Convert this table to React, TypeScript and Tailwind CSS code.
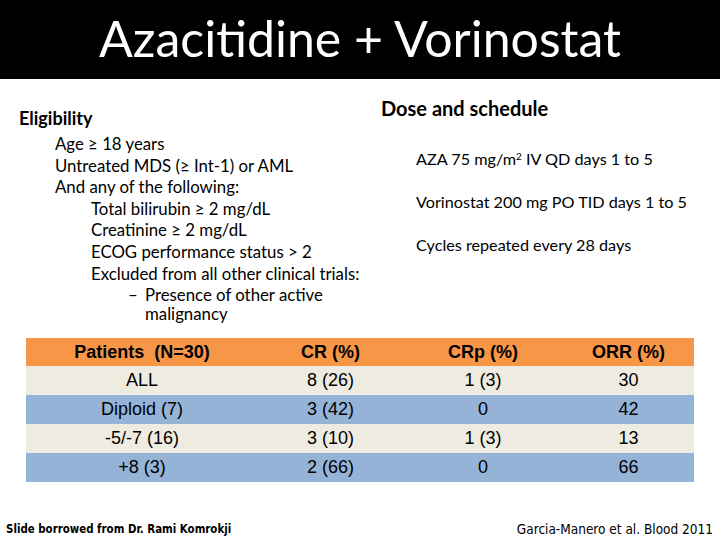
const rows = [
  { name: 'ALL', cr: '8 (26)', crp: '1 (3)', orr: '30', bg: 'bg-[#eeece1]' },
  { name: 'Diploid (7)', cr: '3 (42)', crp: '0', orr: '42', bg: 'bg-[#95b3d7]' },
  { name: '-5/-7 (16)', cr: '3 (10)', crp: '1 (3)', orr: '13', bg: 'bg-[#eeece1]' },
  { name: '+8 (3)', cr: '2 (66)', crp: '0', orr: '66', bg: 'bg-[#95b3d7]' },
];

const body = { fontFamily: 'Lato, "Open Sans", sans-serif' };
const arial = { fontFamily: '"Liberation Sans", Arial, sans-serif' };
const small = { fontFamily: '"DejaVu Sans Condensed", "DejaVu Sans", sans-serif' };

export default function App() {
  return (
    <div className="w-[720px] h-[540px] bg-white flex flex-col text-black overflow-hidden">
      <div className="h-[79px] bg-black flex items-center justify-center">
        <h1 className="text-white text-[50px] leading-none pb-[4px]" style={body}>
          Azacitidine + Vorinostat
        </h1>
      </div>

      <div className="flex h-[259px]">
        <div className="w-[362px] pl-[19px] pt-[28px]" style={body}>
          <h2 className="text-[18px] font-bold leading-[22px]">Eligibility</h2>
          <div className="pl-[36px] pt-[4px] text-[16.8px] leading-[21.6px]">
            <p>Age ≥ 18 years</p>
            <p>Untreated MDS (≥ Int-1) or AML</p>
            <p>And any of the following:</p>
            <div className="pl-[36px]">
              <p>Total bilirubin ≥ 2 mg/dL</p>
              <p>Creatinine ≥ 2 mg/dL</p>
              <p>ECOG performance status &gt; 2</p>
              <p className="whitespace-nowrap">Excluded from all other clinical trials:</p>
              <div className="flex pl-[37px] pt-[1px] leading-[19px]">
                <span className="w-[17px] shrink-0">–</span>
                <span>
                  Presence of other active
                  <br />
                  malignancy
                </span>
              </div>
            </div>
          </div>
        </div>

        <div className="flex-1 pl-[19px] pt-[18px]" style={body}>
          <h2 className="text-[20px] font-bold leading-[22px]">Dose and schedule</h2>
          <div className="pl-[35px] pt-[29px] text-[16.2px] leading-[21px] flex flex-col gap-[22px]">
            <p>
              AZA 75 mg/m<sup className="text-[10px]">2</sup> IV QD days 1 to 5
            </p>
            <p>Vorinostat 200 mg PO TID days 1 to 5</p>
            <p>Cycles repeated every 28 days</p>
          </div>
        </div>
      </div>

      <div className="mx-[26px] w-[668px] text-[18px]" style={arial}>
        <div className="grid grid-cols-[232px_145px_160px_131px] h-[28px] items-center bg-[#f79646] font-bold text-center">
          <span>Patients&nbsp;&nbsp;(N=30)</span>
          <span>CR (%)</span>
          <span>CRp (%)</span>
          <span>ORR (%)</span>
        </div>
        {rows.map((r) => (
          <div
            key={r.name}
            className={`grid grid-cols-[232px_145px_160px_131px] h-[29px] items-center text-center ${r.bg}`}
          >
            <span>{r.name}</span>
            <span>{r.cr}</span>
            <span>{r.crp}</span>
            <span>{r.orr}</span>
          </div>
        ))}
      </div>

      <div className="flex justify-between items-center mt-[37px] pl-[6px] pr-[7px]">
        <span className="text-[11.4px] font-bold" style={small}>
          Slide borrowed from Dr. Rami Komrokji
        </span>
        <span className="text-[13.5px]" style={small}>
          Garcia-Manero et al. Blood 2011
        </span>
      </div>
    </div>
  );
}
